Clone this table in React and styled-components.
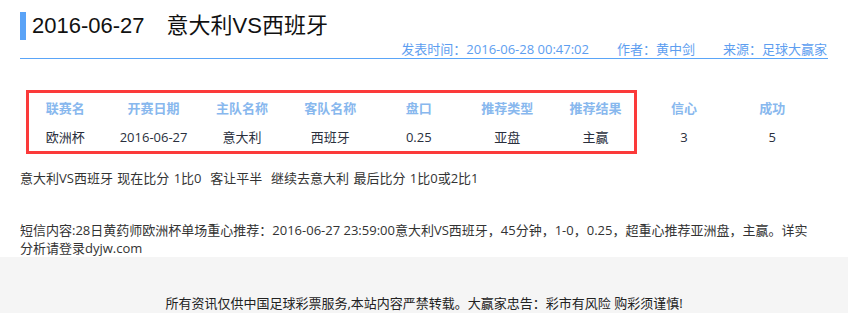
import styled, { createGlobalStyle } from "styled-components";

const GlobalStyle = createGlobalStyle`
  html, body {
    margin: 0;
    padding: 0;
    background: #fff;
  }
  body {
    font-family: "Open Sans", "Noto Sans CJK SC", sans-serif;
    font-size: 13px;
    color: #333;
  }
`;

const columns = [
  { label: "联赛名", value: "欧洲杯" },
  { label: "开赛日期", value: "2016-06-27" },
  { label: "主队名称", value: "意大利" },
  { label: "客队名称", value: "西班牙" },
  { label: "盘口", value: "0.25" },
  { label: "推荐类型", value: "亚盘" },
  { label: "推荐结果", value: "主赢" },
  { label: "信心", value: "3" },
  { label: "成功", value: "5" },
];

const App = () => {
  return (
    <>
      <GlobalStyle />
      <Page>
        <Header>
          <Title>
            2016-06-27<Match>意大利VS西班牙</Match>
          </Title>
          <Meta>
            <span>发表时间：2016-06-28 00:47:02</span>
            <span>作者：黄中剑</span>
            <span>来源：足球大赢家</span>
          </Meta>
        </Header>

        <TableWrap>
          <Grid>
            {columns.map((c) => (
              <HeadCell key={c.label}>{c.label}</HeadCell>
            ))}
            {columns.map((c) => (
              <Cell key={c.label}>{c.value}</Cell>
            ))}
          </Grid>
          <Highlight />
        </TableWrap>

        <Summary>
          意大利VS西班牙 现在比分 1比0&nbsp; 客让平半&nbsp; 继续去意大利 最后比分 1比0或2比1
        </Summary>

        <Sms>
          短信内容:28日黄药师欧洲杯单场重心推荐：2016-06-27 23:59:00意大利VS西班牙，45分钟，1-0，0.25，超重心推荐亚洲盘，主赢。详实分析请登录dyjw.com
        </Sms>
      </Page>
      <Footer>所有资讯仅供中国足球彩票服务,本站内容严禁转载。大赢家忠告：彩市有风险 购彩须谨慎!</Footer>
    </>
  );
};

export default App;

const Page = styled.div`
  padding: 12px 20px 0;
`;

const Header = styled.div`
  border-bottom: 1px solid #5aa5f8;
`;

const Title = styled.h1`
  margin: 0;
  height: 28px;
  line-height: 28px;
  border-left: 6px solid #5aa3f7;
  padding-left: 6px;
  font-family: "Liberation Sans", "Noto Sans CJK SC", sans-serif;
  font-size: 22px;
  font-weight: normal;
  color: #111;
`;

const Match = styled.span`
  margin-left: 22px;
`;

const Meta = styled.div`
  display: flex;
  justify-content: flex-end;
  gap: 28px;
  height: 18px;
  line-height: 18px;
  padding-right: 1px;
  color: #5d9ef0;
  font-size: 13px;
`;

const TableWrap = styled.div`
  position: relative;
  margin: 34px 0 0 1px;
`;

const Grid = styled.div`
  display: grid;
  grid-template-columns: repeat(9, 88.4px);
  grid-auto-rows: 29px;
  align-items: center;
  text-align: center;
`;

const HeadCell = styled.div`
  font-weight: bold;
  color: #88b8ee;
`;

const Cell = styled.div`
  color: #2a2f3d;
`;

const Highlight = styled.div`
  position: absolute;
  left: 5px;
  top: -3px;
  width: 611px;
  height: 64px;
  box-sizing: border-box;
  border: 3px solid #fb3a3a;
  pointer-events: none;
`;

const Summary = styled.p`
  margin: 18px 0 0;
  line-height: 19px;
  word-spacing: 1px;
`;

const Sms = styled.p`
  margin: 33px 0 0;
  line-height: 18px;
  padding-right: 14px;
`;

const Footer = styled.div`
  padding: 37px 0 20px;
  background: #f5f5f5;
  text-align: center;
  color: #222;
  line-height: 18px;
`;
